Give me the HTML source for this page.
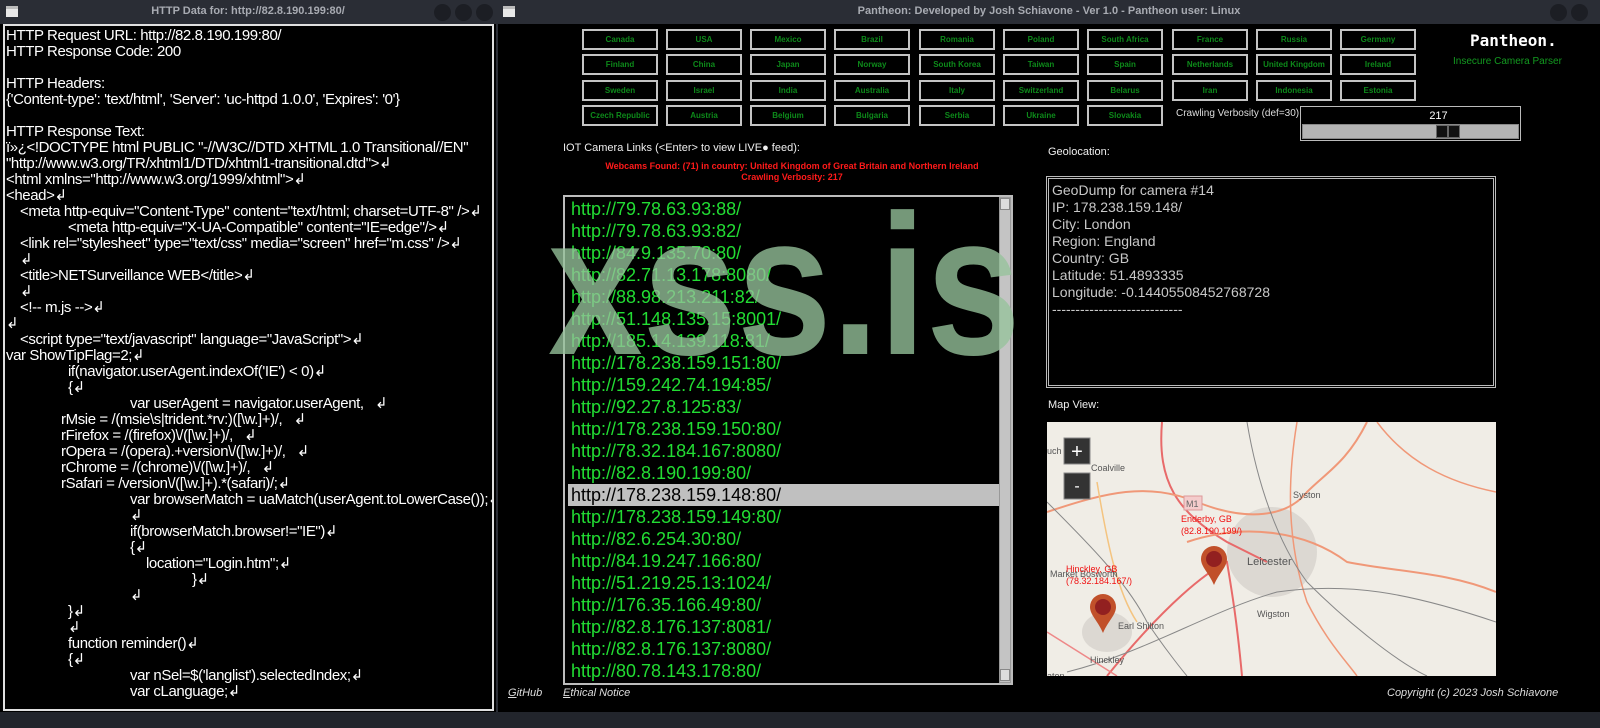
<!DOCTYPE html>
<html><head><meta charset="utf-8">
<style>
*{margin:0;padding:0;box-sizing:border-box}
body{width:1600px;height:728px;background:#000;position:relative;overflow:hidden;font-family:"Liberation Sans","DejaVu Sans",sans-serif;color:#fff}
.abs{position:absolute}
.tb{position:absolute;top:0;height:24px;background:#2a2d35;color:#a8abb2;font-size:11px;font-weight:bold;text-align:center;line-height:22px}
.ico{position:absolute;top:6px;width:12px;height:11px;background:#e8e8e8;border-top:3px solid #bbb}
.circ{position:absolute;top:4px;width:17px;height:17px;border-radius:50%;background:#1c1e24}
#left{position:absolute;left:3px;top:24px;width:491px;height:687px;border:2px solid #e0e0e0;background:#000;overflow:hidden}
#left div{height:16px;line-height:16px;font-size:15px;letter-spacing:-0.4px;white-space:pre;color:#fff}
.btn{position:absolute;width:76px;height:21px;border:2px solid #c4c4c4;color:#0d8a1a;font-size:8px;font-weight:bold;text-align:center;line-height:17px;white-space:nowrap}
#list{position:absolute;left:563px;top:195px;width:450px;height:490px;border:2px solid #bcbcbc;background:#000;overflow:hidden}
#list .r{position:absolute;left:3px;width:432px;height:22px;line-height:22px;font-size:18px;color:#22dd33;padding-left:3px;white-space:nowrap}
#list .sel{background:#c0c0c0;color:#000}
.wm{position:absolute;left:548px;top:186px;font-size:200px;font-weight:bold;color:rgba(150,195,155,0.78);line-height:200px;white-space:nowrap;transform:scaleX(0.85);transform-origin:0 0}
</style></head><body>

<div class="tb" style="left:0;width:496px">HTTP Data for: http://82.8.190.199:80/</div>
<div class="ico" style="left:6px"></div>
<div class="circ" style="left:434px"></div><div class="circ" style="left:455px"></div><div class="circ" style="left:476px"></div>

<div class="tb" style="left:498px;width:1102px">Pantheon: Developed by Josh Schiavone - Ver 1.0 - Pantheon user: Linux</div>
<div class="ico" style="left:503px"></div>
<div class="circ" style="left:1550px"></div><div class="circ" style="left:1571px"></div>
<div class="abs" style="left:496px;top:0;width:2px;height:728px;background:#2a2d35"></div>
<div class="abs" style="left:0;top:712px;width:1600px;height:16px;background:#22252c"></div>

<div id="left" style="padding:2px 0 0 1px">
<div>HTTP Request URL: http://82.8.190.199:80/</div>
<div>HTTP Response Code: 200</div>
<div> </div>
<div>HTTP Headers:</div>
<div>{'Content-type': 'text/html', 'Server': 'uc-httpd 1.0.0', 'Expires': '0'}</div>
<div> </div>
<div>HTTP Response Text:</div>
<div>ï»¿&lt;!DOCTYPE html PUBLIC "-//W3C//DTD XHTML 1.0 Transitional//EN"</div>
<div>"http://www.w3.org/TR/xhtml1/DTD/xhtml1-transitional.dtd"&gt;↲</div>
<div>&lt;html xmlns="http://www.w3.org/1999/xhtml"&gt;↲</div>
<div>&lt;head&gt;↲</div>
<div style="padding-left:14px">&lt;meta http-equiv="Content-Type" content="text/html; charset=UTF-8" /&gt;↲</div>
<div style="padding-left:62px">&lt;meta http-equiv="X-UA-Compatible" content="IE=edge"/&gt;↲</div>
<div style="padding-left:14px">&lt;link rel="stylesheet" type="text/css" media="screen" href="m.css" /&gt;↲</div>
<div style="padding-left:14px">↲</div>
<div style="padding-left:14px">&lt;title&gt;NETSurveillance WEB&lt;/title&gt;↲</div>
<div style="padding-left:14px">↲</div>
<div style="padding-left:14px">&lt;!-- m.js --&gt;↲</div>
<div>↲</div>
<div style="padding-left:14px">&lt;script type="text/javascript" language="JavaScript"&gt;↲</div>
<div>var ShowTipFlag=2;↲</div>
<div style="padding-left:62px">if(navigator.userAgent.indexOf('IE') &lt; 0)↲</div>
<div style="padding-left:62px">{↲</div>
<div style="padding-left:124px">var userAgent = navigator.userAgent,   ↲</div>
<div style="padding-left:55px">rMsie = /(msie\s|trident.*rv:)([\w.]+)/,   ↲</div>
<div style="padding-left:55px">rFirefox = /(firefox)\/([\w.]+)/,   ↲</div>
<div style="padding-left:55px">rOpera = /(opera).+version\/([\w.]+)/,   ↲</div>
<div style="padding-left:55px">rChrome = /(chrome)\/([\w.]+)/,   ↲</div>
<div style="padding-left:55px">rSafari = /version\/([\w.]+).*(safari)/;↲</div>
<div style="padding-left:124px">var browserMatch = uaMatch(userAgent.toLowerCase());↲</div>
<div style="padding-left:124px">↲</div>
<div style="padding-left:124px">if(browserMatch.browser!="IE")↲</div>
<div style="padding-left:124px">{↲</div>
<div style="padding-left:140px">location="Login.htm";↲</div>
<div style="padding-left:186px">}↲</div>
<div style="padding-left:124px">↲</div>
<div style="padding-left:62px">}↲</div>
<div style="padding-left:62px">↲</div>
<div style="padding-left:62px">function reminder()↲</div>
<div style="padding-left:62px">{↲</div>
<div style="padding-left:124px">var nSel=$('langlist').selectedIndex;↲</div>
<div style="padding-left:124px">var cLanguage;↲</div>
</div>

<div class="btn" style="left:582px;top:29px">Canada</div>
<div class="btn" style="left:666px;top:29px">USA</div>
<div class="btn" style="left:750px;top:29px">Mexico</div>
<div class="btn" style="left:834px;top:29px">Brazil</div>
<div class="btn" style="left:919px;top:29px">Romania</div>
<div class="btn" style="left:1003px;top:29px">Poland</div>
<div class="btn" style="left:1087px;top:29px">South Africa</div>
<div class="btn" style="left:1172px;top:29px">France</div>
<div class="btn" style="left:1256px;top:29px">Russia</div>
<div class="btn" style="left:1340px;top:29px">Germany</div>

<div class="btn" style="left:582px;top:54px">Finland</div>
<div class="btn" style="left:666px;top:54px">China</div>
<div class="btn" style="left:750px;top:54px">Japan</div>
<div class="btn" style="left:834px;top:54px">Norway</div>
<div class="btn" style="left:919px;top:54px">South Korea</div>
<div class="btn" style="left:1003px;top:54px">Taiwan</div>
<div class="btn" style="left:1087px;top:54px">Spain</div>
<div class="btn" style="left:1172px;top:54px">Netherlands</div>
<div class="btn" style="left:1256px;top:54px">United Kingdom</div>
<div class="btn" style="left:1340px;top:54px">Ireland</div>

<div class="btn" style="left:582px;top:80px">Sweden</div>
<div class="btn" style="left:666px;top:80px">Israel</div>
<div class="btn" style="left:750px;top:80px">India</div>
<div class="btn" style="left:834px;top:80px">Australia</div>
<div class="btn" style="left:919px;top:80px">Italy</div>
<div class="btn" style="left:1003px;top:80px">Switzerland</div>
<div class="btn" style="left:1087px;top:80px">Belarus</div>
<div class="btn" style="left:1172px;top:80px">Iran</div>
<div class="btn" style="left:1256px;top:80px">Indonesia</div>
<div class="btn" style="left:1340px;top:80px">Estonia</div>

<div class="btn" style="left:582px;top:105px">Czech Republic</div>
<div class="btn" style="left:666px;top:105px">Austria</div>
<div class="btn" style="left:750px;top:105px">Belgium</div>
<div class="btn" style="left:834px;top:105px">Bulgaria</div>
<div class="btn" style="left:919px;top:105px">Serbia</div>
<div class="btn" style="left:1003px;top:105px">Ukraine</div>
<div class="btn" style="left:1087px;top:105px">Slovakia</div>

<div class="abs" style="left:1470px;top:31px;font-family:'DejaVu Sans Mono','Liberation Mono',monospace;font-weight:bold;font-size:16px;color:#fff">Pantheon.</div>
<div class="abs" style="left:1453px;top:56px;font-size:10px;color:#139a20;white-space:nowrap">Insecure Camera Parser</div>

<div class="abs" style="left:1176px;top:108px;font-size:10px;color:#ddd">Crawling Verbosity (def=30):</div>
<div class="abs" style="left:1300px;top:106px;width:221px;height:35px;border:1px solid #bbb;background:#000">
  <div class="abs" style="left:0;top:3px;width:100%;text-align:center;padding-left:56px;font-size:11px;color:#fff">217</div>
  <div class="abs" style="left:1px;top:17px;width:217px;height:15px;background:#b4b4b4;border:1px solid #888"></div>
  <div class="abs" style="left:135px;top:18px;width:12px;height:13px;background:#111;border:1px solid #666"></div>
  <div class="abs" style="left:147px;top:18px;width:12px;height:13px;background:#111;border:1px solid #666"></div>
</div>

<div class="abs" style="left:563px;top:142px;font-size:11px;color:#eee">IOT Camera Links (&lt;Enter&gt; to view LIVE● feed):</div>
<div class="abs" style="left:560px;top:161px;width:464px;text-align:center;font-size:9px;font-weight:bold;color:#ff1a1a;line-height:11px">Webcams Found: (71) in country: United Kingdom of Great Britain and Northern Ireland<br>Crawling Verbosity: 217</div>

<div id="list">
<div class="r" style="top:1px">http://79.78.63.93:88/</div>
<div class="r" style="top:23px">http://79.78.63.93:82/</div>
<div class="r" style="top:45px">http://84.9.135.70:80/</div>
<div class="r" style="top:67px">http://82.71.13.178:8080/</div>
<div class="r" style="top:89px">http://88.98.213.211:82/</div>
<div class="r" style="top:111px">http://51.148.135.15:8001/</div>
<div class="r" style="top:133px">http://185.14.139.118:81/</div>
<div class="r" style="top:155px">http://178.238.159.151:80/</div>
<div class="r" style="top:177px">http://159.242.74.194:85/</div>
<div class="r" style="top:199px">http://92.27.8.125:83/</div>
<div class="r" style="top:221px">http://178.238.159.150:80/</div>
<div class="r" style="top:243px">http://78.32.184.167:8080/</div>
<div class="r" style="top:265px">http://82.8.190.199:80/</div>
<div class="r sel" style="top:287px">http://178.238.159.148:80/</div>
<div class="r" style="top:309px">http://178.238.159.149:80/</div>
<div class="r" style="top:331px">http://82.6.254.30:80/</div>
<div class="r" style="top:353px">http://84.19.247.166:80/</div>
<div class="r" style="top:375px">http://51.219.25.13:1024/</div>
<div class="r" style="top:397px">http://176.35.166.49:80/</div>
<div class="r" style="top:419px">http://82.8.176.137:8081/</div>
<div class="r" style="top:441px">http://82.8.176.137:8080/</div>
<div class="r" style="top:463px">http://80.78.143.178:80/</div>
<div class="abs" style="left:434px;top:0;width:12px;height:486px;background:#c4c4c4;border:1px solid #999"></div>
<div class="abs" style="left:435px;top:1px;width:10px;height:12px;background:#ddd;border:1px solid #888"></div>
<div class="abs" style="left:435px;top:472px;width:10px;height:12px;background:#ddd;border:1px solid #888"></div>
</div>

<div class="wm">xss.is</div>

<div class="abs" style="left:1048px;top:146px;font-size:11px;color:#eee">Geolocation:</div>
<div class="abs" style="left:1046px;top:176px;width:450px;height:212px;border:3px double #bbb;background:#000;padding:3px 0 0 3px;font-size:14px;line-height:17px;color:#c8c8c8">
GeoDump for camera #14<br>IP: 178.238.159.148/<br>City: London<br>Region: England<br>Country: GB<br>Latitude: 51.4893335<br>Longitude: -0.14405508452768728<br>----------------------------
</div>

<div class="abs" style="left:1048px;top:399px;font-size:11px;color:#eee">Map View:</div>
<div class="abs" style="left:1047px;top:422px;width:449px;height:254px;background:#f0ede6;overflow:hidden">
<svg width="449" height="254" viewBox="0 0 449 254" style="position:absolute;left:0;top:0">
 <g fill="none">
  <ellipse cx="225" cy="130" rx="45" ry="45" fill="#dcd8d2"/>
  <ellipse cx="60" cy="210" rx="25" ry="20" fill="#dcd8d2"/>
  <path d="M115 0 C110 60 130 90 180 120 L220 140" stroke="#e86a6a" stroke-width="2"/>
  <path d="M60 254 C120 180 160 150 180 140 C185 170 190 200 195 254" stroke="#e86a6a" stroke-width="2"/>
  <path d="M0 90 C60 70 100 60 150 80 C200 100 240 95 260 70 C280 50 300 40 320 0" stroke="#f09878" stroke-width="2"/>
  <path d="M140 120 C200 100 260 110 300 140 C350 150 400 150 449 170" stroke="#f09878" stroke-width="2"/>
  <path d="M250 0 C240 60 240 120 260 180 C280 220 300 240 310 254" stroke="#f09878" stroke-width="1.5"/>
  <path d="M0 80 C40 120 80 160 100 200 C120 230 140 254 140 254" stroke="#888" stroke-width="1"/>
  <path d="M20 250 C100 230 160 190 230 170 C300 160 360 170 449 200" stroke="#888" stroke-width="1"/>
  <path d="M200 0 C210 60 230 120 260 160 C300 200 350 240 380 254" stroke="#888" stroke-width="1"/>
  <path d="M330 0 C360 40 400 60 449 70" stroke="#f09878" stroke-width="1.5"/>
  <path d="M50 60 C60 120 70 170 90 200" stroke="#f4c480" stroke-width="1.5"/>
  <path d="M0 210 L70 254" stroke="#e88" stroke-width="1.5"/>
 </g>
 <rect x="137" y="74" width="18" height="14" fill="#f4cccc" stroke="#d99"/>
 <text x="139" y="85" font-size="9" fill="#666" font-family="Liberation Sans">M1</text>
 <g font-family="Liberation Sans" fill="#555" font-size="9">
  <text x="0" y="32">uch</text><text x="44" y="49">Coalville</text>
  <text x="246" y="76">Syston</text><text x="3" y="155">Market Bosworth</text>
  <text x="200" y="143" font-size="11">Leicester</text><text x="210" y="195">Wigston</text>
  <text x="71" y="207">Earl Shilton</text><text x="43" y="241">Hinckley</text><text x="0" y="257">aton</text>
 </g>
 <g font-family="Liberation Sans" fill="#f01010" font-size="9">
  <text x="134" y="100">Enderby, GB</text><text x="134" y="112">(82.8.190.199/)</text>
  <text x="19" y="150">Hinckley, GB</text><text x="19" y="162">(78.32.184.167/)</text>
 </g>
 <path d="M167 124 a13 13 0 0 1 13 13 c0 8 -8 14 -13 26 c-5 -12 -13 -18 -13 -26 a13 13 0 0 1 13 -13z" fill="#c1502a"/>
 <circle cx="167" cy="137" r="8" fill="#922020"/>
 <path d="M56 172 a13 13 0 0 1 13 13 c0 8 -8 14 -13 26 c-5 -12 -13 -18 -13 -26 a13 13 0 0 1 13 -13z" fill="#c1502a"/>
 <circle cx="56" cy="185" r="8" fill="#922020"/>
 <rect x="17" y="16" width="26" height="26" fill="#333" stroke="#888"/>
 <rect x="17" y="51" width="26" height="26" fill="#333" stroke="#888"/>
 <text x="30" y="36" text-anchor="middle" fill="#fff" font-size="20" font-family="Liberation Sans">+</text>
 <text x="30" y="69" text-anchor="middle" fill="#fff" font-size="16" font-family="Liberation Sans">-</text>
</svg>
</div>

<div class="abs" style="left:508px;top:687px;font-size:11px;font-style:italic;color:#ddd"><u>G</u>itHub</div>
<div class="abs" style="left:563px;top:687px;font-size:11px;font-style:italic;color:#ddd"><u>E</u>thical Notice</div>
<div class="abs" style="left:1387px;top:687px;font-size:11px;font-style:italic;color:#ddd">Copyright (c) 2023 Josh Schiavone</div>
</body></html>
